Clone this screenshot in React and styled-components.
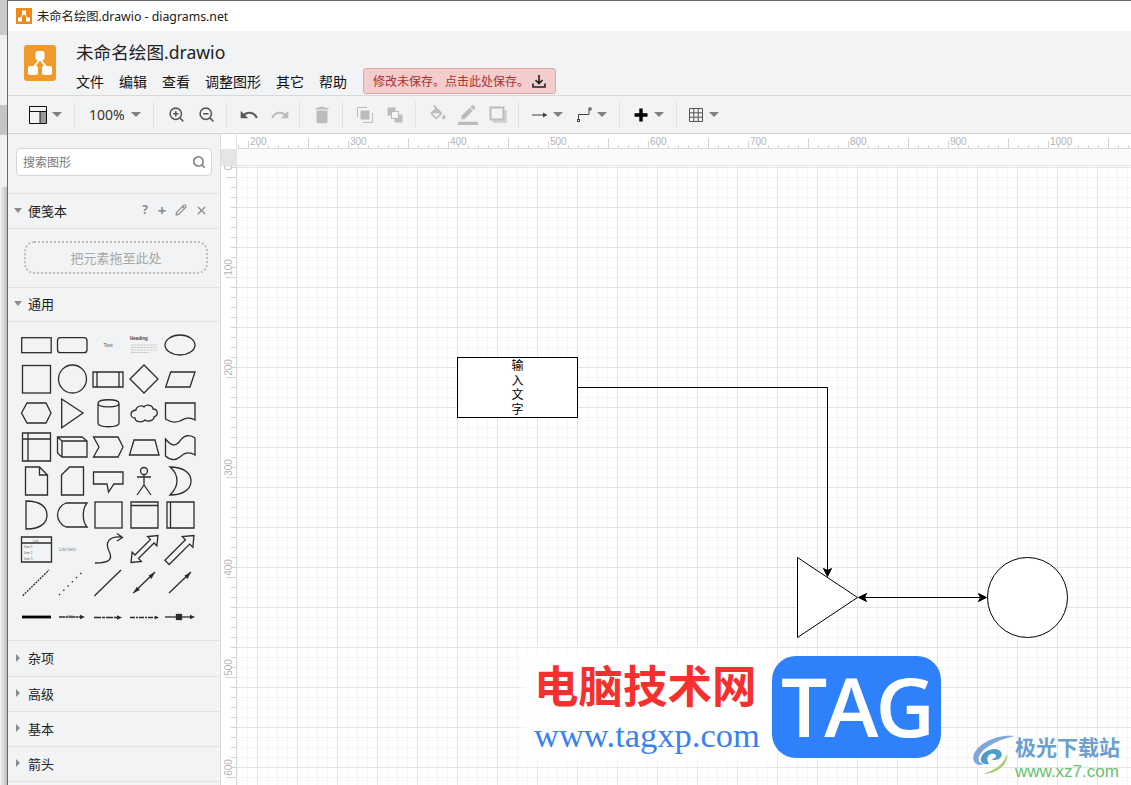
import React from "react";
import styled, { createGlobalStyle } from "styled-components";
import { Search, Pencil, X, ZoomIn, ZoomOut } from "lucide-react";

const cjk = `"Noto Sans", "Noto Sans CJK SC", sans-serif`;

const GlobalStyle = createGlobalStyle`
  html, body { margin: 0; padding: 0; background: #fff; }
  body { font-family: ${cjk}; color: #222; }
  * { box-sizing: border-box; }
`;

const Page = styled.div`
  display: flex;
  width: 1131px;
  height: 785px;
  overflow: hidden;
`;

const Strip = styled.div`
  width: 8px;
  flex-shrink: 0;
  display: flex;
  flex-direction: column;
  border-right: 1px solid #686868;
`;

const StripPart = styled.div`
  height: ${(p) => p.$h}px;
  flex-grow: ${(p) => (p.$grow ? 1 : 0)};
  background: ${(p) => p.$bg};
`;

const Main = styled.div`
  flex: 1;
  display: flex;
  flex-direction: column;
  min-width: 0;
`;

const TitleBar = styled.div`
  height: 31px;
  background: #fff;
  border-top: 1px solid #686868;
  display: flex;
  align-items: center;
  padding-left: 8px;
  font-size: 12.3px;
  color: #222;
`;

const Favicon = styled.svg`
  width: 16px;
  height: 16px;
  margin-right: 5px;
`;

const Header = styled.div`
  height: 65px;
  background: #f1f3f4;
  border-bottom: 1px solid #d6d8da;
  display: flex;
  padding-left: 16px;
`;

const Logo = styled.div`
  width: 32px;
  height: 36px;
  margin-top: 14px;
  border-radius: 3px;
  background: #f09a2b;
  display: flex;
  align-items: center;
  justify-content: center;
`;

const HeaderText = styled.div`
  margin-left: 20px;
  display: flex;
  flex-direction: column;
`;

const FileName = styled.div`
  font-size: 17.6px;
  line-height: 24px;
  margin-top: 9px;
  margin-bottom: 1px;
  color: #222;
`;

const MenuRow = styled.div`
  display: flex;
  align-items: center;
  margin-top: 3px;
  height: 26px;
`;

const MenuItem = styled.span`
  font-size: 14px;
  margin-right: 15px;
  color: #111;
`;

const SaveNotice = styled.div`
  width: 193px;
  height: 26px;
  margin-left: 1px;
  display: flex;
  align-items: center;
  justify-content: space-between;
  padding: 0 9px;
  background: #f3cccc;
  border: 1px solid #dca6a6;
  border-radius: 3px;
  color: #a83232;
  font-size: 12px;
`;

const Toolbar = styled.div`
  height: 38px;
  background: #f1f3f4;
  border-bottom: 1px solid #d0d2d4;
  display: flex;
  align-items: center;
`;

const ToolGroup = styled.div`
  width: ${(p) => p.$w}px;
  height: 26px;
  display: flex;
  align-items: center;
  padding-left: ${(p) => p.$pad}px;
  border-right: ${(p) => (p.$last ? "none" : "1px solid #dfe1e3")};
  flex-shrink: 0;
`;

const Tool = styled.div`
  width: ${(p) => p.$w}px;
  margin-left: ${(p) => p.$ml || 0}px;
  flex-shrink: 0;
  display: flex;
  align-items: center;
  justify-content: center;
  color: ${(p) => (p.$off ? "#bcbcbc" : "#555")};
`;

const Caret = styled.div`
  width: ${(p) => p.$w}px;
  flex-shrink: 0;
  display: flex;
  justify-content: center;
  &::after {
    content: "";
    flex-shrink: 0;
    border-style: solid;
    border-width: 5px 5px 0 5px;
    border-color: #808080 transparent transparent transparent;
  }
`;

const ZoomLabel = styled.span`
  font-size: 14px;
  width: 35px;
  color: #333;
  white-space: nowrap;
`;

const Body = styled.div`
  flex: 1;
  display: flex;
  min-height: 0;
`;

const Sidebar = styled.div`
  width: 213px;
  flex-shrink: 0;
  background: #f1f3f4;
  border-right: 1px solid #d9dbdd;
  display: flex;
  flex-direction: column;
`;

const SearchArea = styled.div`
  height: 60px;
  padding: 14px 8px 0;
  border-bottom: 1px solid #e0e2e4;
`;

const SearchBox = styled.div`
  height: 28px;
  background: #fff;
  border: 1px solid #d4d6d8;
  border-radius: 4px;
  display: flex;
  align-items: center;
  justify-content: space-between;
  padding: 0 5px 0 6px;
  font-size: 12px;
  color: #777;
`;

const SectionHead = styled.div`
  height: ${(p) => p.$h}px;
  flex-shrink: 0;
  display: flex;
  align-items: center;
  padding-left: ${(p) => (p.$open ? 6 : 8)}px;
  padding-bottom: 2px;
  border-bottom: 1px solid #e0e2e4;
  font-size: 13px;
  color: #222;
`;

const OpenCaret = styled.span`
  width: 0;
  height: 0;
  margin-right: 6px;
  border-style: solid;
  border-width: 5px 4px 0 4px;
  border-color: #8c8c8c transparent transparent transparent;
`;

const ClosedCaret = styled.span`
  width: 0;
  height: 0;
  margin-right: 8px;
  border-style: solid;
  border-width: 4px 0 4px 4px;
  border-color: transparent transparent transparent #8c8c8c;
`;

const SectionTools = styled.div`
  margin-left: auto;
  display: flex;
  align-items: center;
  gap: 8px;
  padding-right: 12px;
  color: #8a8a8a;
  font-size: 12px;
`;

const ToolMark = styled.span`
  width: ${(p) => p.$w}px;
  text-align: center;
  font-size: ${(p) => p.$size}px;
  font-weight: 700;
  line-height: 14px;
`;

const ScratchArea = styled.div`
  height: 59px;
  flex-shrink: 0;
  padding: 12px 12px 0 16px;
  border-bottom: 1px solid #e0e2e4;
`;

const DropZone = styled.div`
  height: 33px;
  border: 2px dotted #bdbdbd;
  border-radius: 10px;
  display: flex;
  align-items: center;
  justify-content: center;
  font-size: 13px;
  color: #a8a8a8;
`;

const ShapeGrid = styled.div`
  height: 319px;
  flex-shrink: 0;
  padding: 6px 0 0 10px;
  border-bottom: 1px solid #e0e2e4;
  display: grid;
  grid-template-columns: repeat(5, 36px);
  grid-auto-rows: 34px;
`;

const Shape = styled.svg`
  width: 36px;
  height: 34px;
  fill: none;
  stroke: #2c2c2c;
  stroke-width: 1.3;
`;

const ShapeText = styled.text`
  fill: ${(p) => p.$color || "#666"};
  stroke: none;
  font-size: ${(p) => p.$size}px;
  font-family: "Liberation Sans", sans-serif;
  font-weight: ${(p) => (p.$bold ? 700 : 400)};
`;

const Solid = styled.polygon`
  fill: #2c2c2c;
  stroke: none;
`;

const Editor = styled.div`
  flex: 1;
  min-width: 0;
  display: flex;
  flex-direction: column;
`;

const RulerRow = styled.div`
  display: flex;
  height: ${(p) => p.$h}px;
  flex-shrink: 0;
`;

const CornerCell = styled.div`
  width: 16px;
  flex-shrink: 0;
  background: ${(p) => p.$bg};
  border-right: 1px solid #e2e3e4;
`;

const RulerTop = styled.svg`
  flex: 1;
  display: block;
  height: 15px;
  background: #fff;
  border-bottom: 1px solid #dcdcdc;
`;

const PageBand = styled.div`
  flex: 1;
  background: #fafafa;
  border-bottom: 1px solid #e4e4e4;
`;

const CanvasRow = styled.div`
  flex: 1;
  display: flex;
  min-height: 0;
`;

const RulerSide = styled.svg`
  width: 16px;
  flex-shrink: 0;
  display: block;
  height: 619px;
  background: #fff;
  border-right: 1px solid #dcdcdc;
`;

const RulerTick = styled.line`
  stroke: #d2d2d2;
  stroke-width: 1;
`;

const RulerLabel = styled.text`
  fill: #b4b4b4;
  font-size: 10px;
  font-family: "Liberation Sans", sans-serif;
`;

const Canvas = styled.div`
  flex: 1;
  position: relative;
  overflow: hidden;
  background-color: #fff;
  background-image:
    linear-gradient(to right, #e4e4e4 1px, transparent 1px),
    linear-gradient(to bottom, #e4e4e4 1px, transparent 1px),
    linear-gradient(to right, #f5f5f5 1px, transparent 1px),
    linear-gradient(to bottom, #f5f5f5 1px, transparent 1px);
  background-size: 40px 40px, 40px 40px, 10px 10px, 10px 10px;
  background-position: 20px 0, 0 1px, 0 0, 0 1px;
`;

const Diagram = styled.svg`
  position: absolute;
  left: 0;
  top: 0;
  width: 894px;
  height: 619px;
  fill: none;
  stroke: #000;
  stroke-width: 1;
`;

const TextNode = styled.div`
  position: absolute;
  left: 220px;
  top: 191px;
  width: 121px;
  height: 61px;
  background: #fff;
  border: 1px solid #000;
  padding-top: 1px;
  color: #000;
  font-size: 12px;
  line-height: 14.5px;
`;

const NodeLabel = styled.div`
  width: 12px;
  margin: 0 auto;
  word-break: break-all;
`;

const Arrowhead = styled.polygon`
  fill: #000;
  stroke: #000;
`;

const WhiteGlow = styled.div`
  position: absolute;
  left: 292px;
  top: 490px;
  width: 240px;
  height: 102px;
  background: rgba(255, 255, 255, 0.92);
  box-shadow: 0 0 10px 6px rgba(255, 255, 255, 0.92);
`;

const RedMark = styled.div`
  position: absolute;
  left: 297px;
  top: 488px;
  font-size: 44.5px;
  line-height: 60px;
  font-weight: 700;
  color: #f5302f;
  white-space: nowrap;
  font-family: "Noto Sans CJK SC", sans-serif;
`;

const BlueUrl = styled.div`
  position: absolute;
  left: 297px;
  top: 550px;
  font-size: 34.5px;
  line-height: 38px;
  color: #3b82ee;
  white-space: nowrap;
  font-family: "Liberation Serif", serif;
`;

const TagBadge = styled.div`
  position: absolute;
  left: 535px;
  top: 490px;
  width: 169px;
  height: 102px;
  padding-bottom: 5px;
  border-radius: 24px;
  background: #2f80fb;
  color: #fff;
  display: flex;
  align-items: center;
  justify-content: center;
  font-family: "Open Sans", sans-serif;
  font-size: 82px;
  font-weight: 600;
  letter-spacing: -3px;
`;

const SiteMark = styled.div`
  position: absolute;
  left: 778px;
  top: 566px;
  font-size: 21px;
  line-height: 28px;
  font-weight: 700;
  color: #6a9fd0;
  white-space: nowrap;
  font-family: "Noto Sans CJK SC", sans-serif;
`;

const SiteUrl = styled.div`
  position: absolute;
  left: 778px;
  top: 596px;
  font-size: 17px;
  line-height: 20px;
  color: #67bf72;
  white-space: nowrap;
  font-family: "Liberation Sans", sans-serif;
`;

const Swirl = styled.svg`
  position: absolute;
  left: 734px;
  top: 568px;
  width: 46px;
  height: 42px;
`;

const MatIcon = ({ d, size = 20 }) => (
  <svg width={size} height={size} viewBox="0 0 24 24" fill="currentColor">
    <path d={d} />
  </svg>
);

const undoPath = "M12.5 8c-2.65 0-5.05.99-6.9 2.6L2 7v9h9l-3.62-3.62c1.39-1.16 3.16-1.88 5.12-1.88 3.54 0 6.55 2.31 7.6 5.5l2.37-.78C21.08 11.03 17.15 8 12.5 8z";
const redoPath = "M18.4 10.6C16.55 8.99 14.15 8 11.5 8c-4.65 0-8.58 3.03-9.96 7.22L3.9 16c1.05-3.19 4.05-5.5 7.6-5.5 1.95 0 3.73.72 5.12 1.88L13 16h9V7l-3.6 3.6z";
const trashPath = "M6 19c0 1.1.9 2 2 2h8c1.1 0 2-.9 2-2V7H6v12zM19 4h-3.5l-1-1h-5l-1 1H5v2h14V4z";
const fillPath = "M16.56 8.94L7.62 0 6.21 1.41l2.38 2.38-5.15 5.15c-.59.59-.59 1.54 0 2.12l5.5 5.5c.29.29.68.44 1.06.44s.77-.15 1.06-.44l5.5-5.5c.59-.58.59-1.53 0-2.12zM5.21 10h9.58l-4.79 5-4.79-5zM19 11.5s-2 2.17-2 3.5c0 1.1.9 2 2 2s2-.9 2-2c0-1.33-2-3.5-2-3.5z";
const linePath = "M17.75 7L14 3.25l-10 10V17h3.75l10-10zm2.96-2.96c.39-.39.39-1.02 0-1.41L18.37.29c-.39-.39-1.02-.39-1.41 0L15 2.25 18.75 6l1.96-1.96zM0 20h24v4H0z";

const LayoutIcon = () => (
  <svg width="18" height="18" viewBox="0 0 18 18">
    <rect x="11" y="5" width="6" height="12" fill="#999" />
    <path d="M.5.5h17v17H.5zM.5 5.5h17M11 5.5v12" fill="none" stroke="#111" />
  </svg>
);

const FrontIcon = () => (
  <svg width="16" height="16" viewBox="0 0 16 16" fill="none" stroke="#bcbcbc">
    <path d="M.5 10V.5H10M15.5 6v9.5H6" />
    <rect x="4" y="4" width="8" height="8" fill="#bcbcbc" />
  </svg>
);

const BackIcon = () => (
  <svg width="16" height="16" viewBox="0 0 16 16" fill="none" stroke="#bcbcbc">
    <rect x="1" y="1" width="7" height="7" fill="#bcbcbc" />
    <rect x="8" y="8" width="7" height="7" fill="#bcbcbc" />
    <rect x="4.5" y="4.5" width="7" height="7" fill="#f1f3f4" />
  </svg>
);

const ShadowIcon = () => (
  <svg width="18" height="18" viewBox="0 0 18 18">
    <rect x="4" y="4" width="14" height="13" fill="#d4d4d4" />
    <rect x="1.5" y="1.5" width="13" height="12" fill="#f1f3f4" stroke="#bcbcbc" strokeWidth="2" />
  </svg>
);

const ArrowIcon = () => (
  <svg width="16" height="8" viewBox="0 0 16 8">
    <path d="M0 4h12" stroke="#444" />
    <path d="M11 1.5L15.5 4 11 6.5z" fill="#444" />
  </svg>
);

const WaypointIcon = () => (
  <svg width="16" height="16" viewBox="0 0 16 16" fill="none" stroke="#444">
    <path d="M1.5 12.5V7.5H12V3.5" />
    <rect x=".5" y="12.5" width="2" height="2" />
    <rect x="12" y="1" width="2" height="2" />
  </svg>
);

const PlusIcon = () => (
  <svg width="14" height="14" viewBox="0 0 14 14">
    <path d="M5.3.5h3.4v4.8h4.8v3.4H8.7v4.8H5.3V8.7H.5V5.3h4.8z" fill="#000" />
  </svg>
);

const TableIcon = () => (
  <svg width="14" height="14" viewBox="0 0 14 14" fill="none" stroke="#555">
    <path d="M.5.5h13v13H.5zM.5 4.8h13M.5 9.2h13M4.8.5v13M9.2.5v13" />
  </svg>
);

const shapes = [
  <rect x="3.7" y="9.7" width="29.5" height="15" />,
  <rect x="3.5" y="9.7" width="29.5" height="15" rx="3" />,
  <ShapeText x="18" y="19" $size={5} $color="#555" textAnchor="middle">Text</ShapeText>,
  <g>
    <ShapeText x="4" y="12" $size={4.5} $bold $color="#444">Heading</ShapeText>
    <path d="M5 17h26M5 19.5h26M5 22h26M5 24.5h18" stroke="#b0b0b0" strokeWidth=".6" strokeDasharray="3 .6 2 .6" />
  </g>,
  <ellipse cx="18" cy="17" rx="15" ry="10" />,

  <rect x="4.5" y="3.5" width="28" height="27.5" />,
  <circle cx="18.5" cy="17" r="14" />,
  <path d="M3 10h30v15H3zM7 10v15M29 10v15" />,
  <polygon points="4,17 18,3 32,17 18,31" />,
  <polygon points="3.7,25 8.7,10 33,10 28,25" />,

  <polygon points="3.5,17 9,7 28,7 33,17 28,27 9,27" />,
  <polygon points="7.7,3 29,17 7.7,31.7" />,
  <path d="M8 7.5C8 2.5 29 2.5 29 7.5V27C29 32 8 32 8 27ZM8 7.5C8 12 29 12 29 7.5" />,
  <path d="M10 14C10 10 16 9 18 11C20 8 27 9 27 13C32 13 33 19 28 21C28 25 21 26 19 24C16 27 9 26 9 22C4 22 3 15 10 14Z" />,
  <path d="M3.5 7H33V24C27 20 22 23 18 25C13 27 8 26 3.5 23Z" />,

  <path d="M4.5 3H32.5V31H4.5ZM4.5 9H32.5M10 3V31" />,
  <path d="M3.5 7H28L33 11V27H8L3.5 23ZM8 27V11H33M8 11L3.5 7" />,
  <polygon points="3.5,7 28,7 33,17 28,27 3.5,27 9,17" />,
  <polygon points="3.5,25 8,10 29,10 33,25" />,
  <path d="M3.5 9C10 17 14 16 18 11C22 5 28 4 33 8V25C27 21 22 23 18 27C13 31 8 30 3.5 26Z" />,

  <path d="M7.5 3H21.5L29.5 11V31H7.5ZM21.5 3V11H29.5" />,
  <path d="M7.5 11L15.5 3H29.5V31H7.5Z" />,
  <path d="M3.5 8H33V20H24L18.5 28L17 20H3.5Z" />,
  <g>
    <circle cx="18" cy="7" r="3.5" />
    <path d="M18 10.5V21M11 13H25M18 21L11 31M18 21L25 31" />
  </g>,
  <path d="M8 3C20 3 29 8 29 17C29 26 20 31 8 31C13 26 15 22 15 17C15 12 13 7 8 3Z" />,

  <path d="M8 3C24 3 29 10 29 17C29 24 24 31 8 31Z" />,
  <path d="M12 5H33C28 11 28 23 33 29H12C7 27 3.5 22 3.5 17C3.5 12 7 7 12 5Z" />,
  <rect x="5" y="4" width="27" height="26" />,
  <path d="M5 4H32V30H5ZM5 7.5H32" />,
  <path d="M5 4H32V30H5ZM8.5 4V30" />,

  <g>
    <path d="M3.5 5H33.5V30H3.5ZM3.5 11H33.5" />
    <ShapeText x="15" y="9.5" $size={3.5}>List</ShapeText>
    <ShapeText x="6" y="16" $size={3}>Item 1</ShapeText>
    <ShapeText x="6" y="22" $size={3}>Item 2</ShapeText>
    <ShapeText x="6" y="28" $size={3}>Item 3</ShapeText>
  </g>,
  <ShapeText x="5" y="19" $size={4.5} $color="#888">List Item</ShapeText>,
  <path d="M5 31C20 31 23 27 19 19C15 11 18 4 32 5M27 1.5L32.5 5.5L27 9" />,
  <path transform="translate(18.5 17) rotate(-45)" d="M-19 0L-11 -6.5V-2.5H11V-6.5L19 0L11 6.5V2.5H-11V6.5Z" />,
  <path transform="translate(18.5 17) rotate(-45)" d="M-19 -3H10V-7.5L19 0L10 7.5V3H-19Z" />,

  <line x1="4.7" y1="29.7" x2="31" y2="4" strokeDasharray="2 1" />,
  <line x1="5" y1="29" x2="29.3" y2="5" strokeDasharray="1.5 4.5" />,
  <line x1="4.3" y1="30" x2="31" y2="4" />,
  <g>
    <line x1="7.3" y1="27" x2="29" y2="6" />
    <Solid points="29,6 25.5,13 22.5,9.5" />
    <Solid points="7.3,27 14,24 10.8,20.8" />
  </g>,
  <g>
    <line x1="7" y1="27" x2="29" y2="6" />
    <Solid points="29,6 25.5,13 22.5,9.5" />
  </g>,

  <line x1="4" y1="17" x2="33" y2="17" stroke="#000" strokeWidth="2.8" />,
  <g>
    <line x1="5" y1="17" x2="28" y2="17" strokeDasharray="6 .5 3 .5" />
    <Solid points="31,17 26,14.8 26,19.2" />
    <ShapeText x="13" y="16" $size={2.5}>Label</ShapeText>
  </g>,
  <g>
    <line x1="4" y1="17.5" x2="28" y2="17.5" strokeDasharray="7 1 3 1" />
    <Solid points="32,17.5 27,15.3 27,19.7" />
  </g>,
  <g>
    <line x1="4" y1="17.5" x2="30" y2="17.5" strokeDasharray="5 1 2 1" />
    <Solid points="33,17.5 29,15.8 29,19.2" />
  </g>,
  <g>
    <line x1="3" y1="17" x2="31" y2="17" />
    <Solid points="33,17 28,14.8 28,19.2" />
    <rect x="14.5" y="14.5" width="5" height="5" fill="#2c2c2c" />
  </g>,
];

const range = (from, to, step) => {
  const out = [];
  for (let v = from; v <= to; v += step) out.push(v);
  return out;
};

const TopRuler = () => (
  <RulerTop viewBox="237 134 894 14" preserveAspectRatio="none">
    {range(238, 1131, 10).map((x) => {
      const long = (x - 208) % 100 === 0;
      const mid = (x - 248) % 100 === 0;
      return <RulerTick key={x} x1={x + 0.5} x2={x + 0.5} y1={long ? 138 : mid ? 141 : 145} y2="148" />;
    })}
    {range(200, 1000, 100).map((v) => (
      <RulerLabel key={v} x={v + 50} y="145">{v}</RulerLabel>
    ))}
  </RulerTop>
);

const SideRuler = () => (
  <RulerSide viewBox="221 166 15 619" preserveAspectRatio="none">
    {range(167, 785, 10).map((y) => {
      const long = (y - 177) % 100 === 0;
      return <RulerTick key={y} x1={long ? 226 : 231} x2="236" y1={y + 0.5} y2={y + 0.5} />;
    })}
    {range(0, 600, 100).map((v) => (
      <RulerLabel key={v} textAnchor="middle" transform={`translate(232 ${v + 167.5}) rotate(-90)`}>{v}</RulerLabel>
    ))}
  </RulerSide>
);

const App = () => (
  <Page>
    <GlobalStyle />
    <Strip>
      <StripPart $h={35} $bg="#cbcbcb" />
      <StripPart $h={70} $bg="#f0f0f0" />
      <StripPart $h={30} $bg="#c4c4c4" />
      <StripPart $h={52} $bg="#f2f2f2" />
      <StripPart $grow $bg="linear-gradient(to right, #f4f4f4, #bdbdbd)" />
    </Strip>
    <Main>
      <TitleBar>
        <Favicon viewBox="0 0 16 16">
          <rect width="16" height="16" fill="#ee8a17" />
          <path d="M8 5L4 11M8 5l4 6" stroke="#fff" />
          <rect x="6" y="2.5" width="4" height="4" fill="#fff" />
          <rect x="2" y="9.5" width="4" height="4" fill="#fff" />
          <rect x="10" y="9.5" width="4" height="4" fill="#fff" />
        </Favicon>
        未命名绘图.drawio - diagrams.net
      </TitleBar>
      <Header>
        <Logo>
          <svg width="26" height="28" viewBox="0 0 26 28">
            <path d="M13 10L6 19M13 10l7 9" stroke="#fff" strokeWidth="2" />
            <rect x="8.5" y="2" width="9" height="9" rx="2" fill="#fff" />
            <rect x="1" y="17" width="10" height="9" rx="2" fill="#fff" />
            <rect x="15" y="17" width="10" height="9" rx="2" fill="#fff" />
          </svg>
        </Logo>
        <HeaderText>
          <FileName>未命名绘图.drawio</FileName>
          <MenuRow>
            {["文件", "编辑", "查看", "调整图形", "其它", "帮助"].map((m) => (
              <MenuItem key={m}>{m}</MenuItem>
            ))}
            <SaveNotice>
              修改未保存。点击此处保存。
              <svg width="14" height="14" viewBox="0 0 14 14" fill="none" stroke="#222" strokeWidth="1.6">
                <path d="M7 1v8M3.5 6L7 9.5 10.5 6M1 9.5V13h12V9.5" />
              </svg>
            </SaveNotice>
          </MenuRow>
        </HeaderText>
      </Header>
      <Toolbar>
        <ToolGroup $w={67} $pad={20}>
          <Tool $w={20}><LayoutIcon /></Tool>
          <Caret $w={18} />
        </ToolGroup>
        <ToolGroup $w={79} $pad={14}>
          <ZoomLabel>100%</ZoomLabel>
          <Caret $w={24} />
        </ToolGroup>
        <ToolGroup $w={73} $pad={7}>
          <Tool $w={30}><ZoomIn size={17} strokeWidth={2.2} /></Tool>
          <Tool $w={30}><ZoomOut size={17} strokeWidth={2.2} /></Tool>
        </ToolGroup>
        <ToolGroup $w={73} $pad={6}>
          <Tool $w={31}><MatIcon d={undoPath} /></Tool>
          <Tool $w={31} $off><MatIcon d={redoPath} /></Tool>
        </ToolGroup>
        <ToolGroup $w={43} $pad={7}>
          <Tool $w={30} $off><MatIcon d={trashPath} size={22} /></Tool>
        </ToolGroup>
        <ToolGroup $w={73} $pad={7}>
          <Tool $w={30}><FrontIcon /></Tool>
          <Tool $w={30}><BackIcon /></Tool>
        </ToolGroup>
        <ToolGroup $w={103} $pad={7}>
          <Tool $w={30} $off><MatIcon d={fillPath} /></Tool>
          <Tool $w={30} $off><MatIcon d={linePath} /></Tool>
          <Tool $w={30}><ShadowIcon /></Tool>
        </ToolGroup>
        <ToolGroup $w={101} $pad={9}>
          <Tool $w={24}><ArrowIcon /></Tool>
          <Caret $w={12} />
          <Tool $w={26} $ml={8}><WaypointIcon /></Tool>
          <Caret $w={8} />
        </ToolGroup>
        <ToolGroup $w={57} $pad={10}>
          <Tool $w={22}><PlusIcon /></Tool>
          <Caret $w={14} />
        </ToolGroup>
        <ToolGroup $w={60} $pad={9} $last>
          <Tool $w={20}><TableIcon /></Tool>
          <Caret $w={16} />
        </ToolGroup>
      </Toolbar>
      <Body>
        <Sidebar>
          <SearchArea>
            <SearchBox>
              搜索图形
              <Search size={14} color="#777" strokeWidth={2.6} />
            </SearchBox>
          </SearchArea>
          <SectionHead $h={35} $open>
            <OpenCaret />
            便笺本
            <SectionTools>
              <ToolMark $w={8} $size={12}>?</ToolMark>
              <ToolMark $w={10} $size={15}>+</ToolMark>
              <Pencil size={12} strokeWidth={2.4} />
              <X size={13} strokeWidth={2.2} />
            </SectionTools>
          </SectionHead>
          <ScratchArea>
            <DropZone>把元素拖至此处</DropZone>
          </ScratchArea>
          <SectionHead $h={34} $open>
            <OpenCaret />
            通用
          </SectionHead>
          <ShapeGrid>
            {shapes.map((s, i) => (
              <Shape key={i} viewBox="0 0 36 34">{s}</Shape>
            ))}
          </ShapeGrid>
          {[["杂项", 36], ["高级", 35], ["基本", 35], ["箭头", 35]].map(([name, h]) => (
            <SectionHead key={name} $h={h}>
              <ClosedCaret />
              {name}
            </SectionHead>
          ))}
        </Sidebar>
        <Editor>
          <RulerRow $h={15}>
            <CornerCell $bg="#fff" />
            <TopRuler />
          </RulerRow>
          <RulerRow $h={17}>
            <CornerCell $bg="#e3e5e7" />
            <PageBand />
          </RulerRow>
          <CanvasRow>
            <SideRuler />
            <Canvas>
              <Diagram viewBox="237 166 894 619">
                <polygon points="797.5,557.5 857.5,597.5 797.5,637.5" fill="#fff" />
                <circle cx="1027.5" cy="597.5" r="40" fill="#fff" />
                <path d="M578 387.5H827.5V570" />
                <Arrowhead points="827.5,576.5 823.5,568.5 827.5,570.5 831.5,568.5" />
                <path d="M865 597.5H980" />
                <Arrowhead points="858.5,597.5 866.5,593.5 864.5,597.5 866.5,601.5" />
                <Arrowhead points="986.5,597.5 978.5,593.5 980.5,597.5 978.5,601.5" />
              </Diagram>
              <TextNode>
                <NodeLabel>输入文字</NodeLabel>
              </TextNode>
              <WhiteGlow />
              <RedMark>电脑技术网</RedMark>
              <BlueUrl>www.tagxp.com</BlueUrl>
              <TagBadge>TAG</TagBadge>
              <Swirl viewBox="0 0 46 42">
                <path d="M44 2C28 0 8 8 3 20C0 28 6 33 13 30C7 29 6 24 10 19C16 11 30 5 44 2Z" fill="#7fa8d8" />
                <path d="M10 24C12 16 26 12 30 18C33 23 26 28 20 25C25 25 27 21 23 20C18 19 14 24 18 30C12 31 9 28 10 24Z" fill="#4f9ccc" />
                <path d="M36 20C38 30 26 40 12 40C24 36 33 30 36 20Z" fill="#a8d070" />
              </Swirl>
              <SiteMark>极光下载站</SiteMark>
              <SiteUrl>www.xz7.com</SiteUrl>
            </Canvas>
          </CanvasRow>
        </Editor>
      </Body>
    </Main>
  </Page>
);

export default App;
